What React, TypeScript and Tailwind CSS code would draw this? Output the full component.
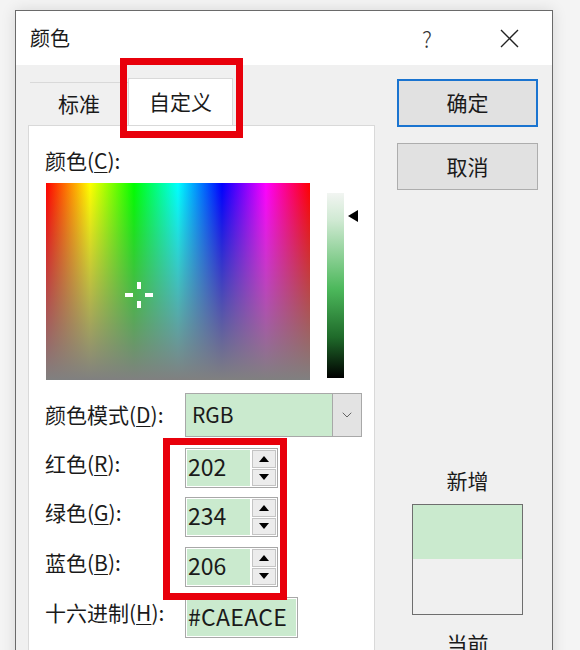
import React from 'react';
import { ChevronDown } from 'lucide-react';

const green = 'bg-[#caeace]';

function Label({ text, k, className = '' }: { text: string; k: string; className?: string }) {
    return (
        <div className={`w-[140px] shrink-0 text-[21px] text-[#1a1a1a] ${className}`}>
            {text}(<span className="underline underline-offset-[3px] decoration-1">{k}</span>):
        </div>
    );
}

function Spin({ value }: { value: string }) {
    return (
        <div className="flex h-[40px] w-[93px] border border-[#a8a8a8] bg-white p-[1px]">
            <div className={`flex flex-1 items-center pb-[3px] pl-[1px] text-[23px] text-[#1a1a1a] ${green}`}>{value}</div>
            <div className="ml-[2px] flex w-[24px] flex-col gap-[1px]">
                <div className="flex flex-1 items-center justify-center border border-[#c4c4c4] bg-[#ececec]">
                    <div className="h-0 w-0 border-x-[5px] border-b-[6px] border-x-transparent border-b-black" />
                </div>
                <div className="flex flex-1 items-center justify-center border border-[#c4c4c4] bg-[#ececec]">
                    <div className="h-0 w-0 border-x-[5px] border-t-[6px] border-x-transparent border-t-black" />
                </div>
            </div>
        </div>
    );
}

export default function App() {
    return (
        <div className="relative h-[650px] w-[580px] overflow-hidden bg-[#f4f4f4] pl-[15px] pt-[10px] font-['Noto_Sans_CJK_SC',sans-serif] text-[#1a1a1a]">
            <div className="flex h-[660px] w-[538px] flex-col border border-[#6a6a6a] bg-[#f0f0f0] shadow-[0_0_14px_rgba(0,0,0,0.12)]">
                {/* title bar */}
                <div className="flex h-[54px] shrink-0 items-center bg-white pl-[14px] pr-[33px]">
                    <span className="text-[20px]">颜色</span>
                    <span className="ml-auto text-[22px] font-light text-[#333]">?</span>
                    <svg className="ml-[68px]" width="19" height="19" viewBox="0 0 19 19">
                        <path d="M1 1 L18 18 M18 1 L1 18" stroke="#222" strokeWidth="1.4" fill="none" />
                    </svg>
                </div>

                <div className="flex flex-1">
                    {/* left: tabs + panel */}
                    <div className="ml-[12px] flex w-[347px] flex-col pt-[13px]">
                        <div className="flex h-[47px] items-end">
                            <div className="ml-[2px] flex h-[43px] w-[98px] items-center justify-center border-t border-[#d9d9d9] text-[21px]">
                                标准
                            </div>
                            <div className="-mb-px flex h-[48px] w-[105px] items-center justify-center border-x border-t border-[#d9d9d9] bg-white pb-[2px] text-[21px]">
                                自定义
                            </div>
                        </div>
                        <div className="flex-1 border border-[#d9d9d9] bg-white pl-[16px] pt-[20px]">
                            <div className="h-[28px] text-[21px] leading-[28px]">
                                颜色(<span className="underline underline-offset-[3px] decoration-1">C</span>):
                            </div>
                            <div className="mt-[9px] flex items-start">
                                <div className="relative ml-px h-[197px] w-[264px] bg-[linear-gradient(to_right,#ff0000,#ffff00,#00ff00,#00ffff,#0000ff,#ff00ff,#ff0000)]">
                                    <div className="absolute inset-0 bg-[linear-gradient(to_bottom,rgba(128,128,128,0),#808080)]" />
                                    <div className="absolute left-[79px] top-[99px] h-[26px] w-[28px]">
                                        <div className="absolute left-[12px] top-0 h-[7px] w-[4px] bg-white" />
                                        <div className="absolute bottom-0 left-[12px] h-[7px] w-[4px] bg-white" />
                                        <div className="absolute left-0 top-[11px] h-[4px] w-[8px] bg-white" />
                                        <div className="absolute right-0 top-[11px] h-[4px] w-[8px] bg-white" />
                                    </div>
                                </div>
                                <div className="ml-[17px] mt-[10px] h-[185px] w-[17px] bg-[linear-gradient(to_bottom,#f2f5f2,#cfe9d2_15%,#4cb85b_52%,#1f6a2a_78%,#000000)]" />
                                <div className="ml-[4px] mt-[27px] h-0 w-0 border-y-[6px] border-r-[10px] border-y-transparent border-r-black" />
                            </div>

                            <div className="mt-[13px] flex items-center">
                                <Label text="颜色模式" k="D" />
                                <div className={`flex h-[44px] w-[177px] border border-[#a8a8a8] ${green}`}>
                                    <div className="flex flex-1 items-center pl-[6px] text-[21px]">RGB</div>
                                    <div className="flex w-[29px] items-center justify-center border-l border-[#a8a8a8] bg-[#e3e3e3]">
                                        <ChevronDown size={16} strokeWidth={1.2} color="#444" />
                                    </div>
                                </div>
                            </div>

                            <div className="mt-[11px] flex items-center">
                                <Label text="红色" k="R" className="-mt-[9px]" />
                                <Spin value="202" />
                            </div>
                            <div className="mt-[9px] flex items-center">
                                <Label text="绿色" k="G" className="-mt-[9px]" />
                                <Spin value="234" />
                            </div>
                            <div className="mt-[10px] flex items-center">
                                <Label text="蓝色" k="B" className="-mt-[9px]" />
                                <Spin value="206" />
                            </div>
                            <div className="mt-[10px] flex items-center">
                                <Label text="十六进制" k="H" className="-mt-[9px]" />
                                <div className="h-[41px] w-[113px] border border-[#a8a8a8] bg-white p-[1px]">
                                    <div className={`flex h-full items-center pb-[2px] pl-[1px] text-[23px] tracking-[0.3px] ${green}`}>#CAEACE</div>
                                </div>
                            </div>
                        </div>
                    </div>

                    {/* right: buttons + preview */}
                    <div className="ml-[22px] flex w-[141px] flex-col items-center pt-[14px]">
                        <div className="flex h-[48px] w-[141px] items-center justify-center border-2 border-[#1a74d0] bg-[#e1e1e1] text-[21px]">
                            确定
                        </div>
                        <div className="mt-[16px] flex h-[47px] w-[141px] items-center justify-center border border-[#adadad] bg-[#e1e1e1] text-[21px]">
                            取消
                        </div>
                        <div className="mt-[276px] h-[28px] text-[21px] leading-[28px]">新增</div>
                        <div className="mt-[10px] flex h-[111px] w-[111px] flex-col border border-[#6e6e6e]">
                            <div className={`h-[54px] ${green}`} />
                            <div className="flex-1 bg-[#f0f0f0]" />
                        </div>
                        <div className="mt-[14px] h-[28px] text-[21px] leading-[28px]">当前</div>
                    </div>
                </div>
            </div>

            {/* red annotation boxes */}
            <div className="absolute left-[120px] top-[58px] h-[80px] w-[123px] border-[7px] border-[#e8000b]" />
            <div className="absolute left-[163px] top-[438px] h-[162px] w-[124px] border-[7px] border-[#e8000b]" />
        </div>
    );
}
